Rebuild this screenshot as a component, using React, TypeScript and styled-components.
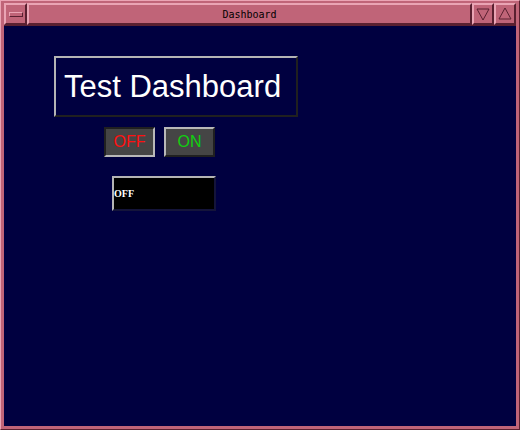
import styled, { createGlobalStyle } from "styled-components";

const GlobalStyle = createGlobalStyle`
  html, body {
    margin: 0;
    padding: 0;
    background: #000040;
  }
  body {
    font-family: "Liberation Sans", Arial, sans-serif;
  }
`;

const pink = "#c06478";
const pinkLight = "#eaa4b4";
const pinkDark = "#5a2030";

const Window = styled.div`
  width: 520px;
  height: 430px;
  box-sizing: border-box;
  background: ${pink};
  border-top: 1px solid ${pinkLight};
  border-left: 1px solid ${pinkLight};
  border-right: 1px solid ${pinkDark};
  border-bottom: 1px solid ${pinkDark};
  padding: 2px 3px 3px 3px;
  display: flex;
  flex-direction: column;
`;

const TitleBar = styled.div`
  height: 22px;
  display: flex;
  flex-shrink: 0;
`;

const BarButton = styled.div<{ $w: number }>`
  width: ${(p) => p.$w}px;
  box-sizing: border-box;
  border-top: 2px solid ${pinkLight};
  border-left: 2px solid ${pinkLight};
  border-right: 2px solid ${pinkDark};
  border-bottom: 2px solid ${pinkDark};
  display: flex;
  align-items: center;
  justify-content: center;
  flex-shrink: 0;
`;

const MenuBar = styled.div`
  width: 12px;
  height: 3px;
  border-top: 1px solid ${pinkLight};
  border-left: 1px solid ${pinkLight};
  border-right: 1px solid ${pinkDark};
  border-bottom: 1px solid ${pinkDark};
`;

const TitleArea = styled.div`
  flex: 1;
  box-sizing: border-box;
  border-top: 2px solid ${pinkLight};
  border-left: 2px solid ${pinkLight};
  border-right: 2px solid ${pinkDark};
  border-bottom: 2px solid ${pinkDark};
  display: flex;
  align-items: center;
  justify-content: center;
  font-family: "DejaVu Sans Mono", monospace;
  font-size: 10px;
  color: #000;
`;

const Content = styled.div`
  flex: 1;
  background: #000040;
  border-top: 1px solid ${pinkDark};
  display: flex;
  flex-direction: column;
  align-items: flex-start;
  padding: 30px 0 0 50px;
`;

const TitleBox = styled.div`
  width: 244px;
  height: 61px;
  box-sizing: border-box;
  border-top: 2px solid #b4b4b4;
  border-left: 2px solid #b4b4b4;
  border-right: 2px solid #202020;
  border-bottom: 2px solid #202020;
  display: flex;
  align-items: center;
  padding-left: 8px;
  color: #fff;
  font-size: 31px;
`;

const ButtonRow = styled.div`
  display: flex;
  gap: 9px;
  margin: 10px 0 0 50px;
`;

const Toggle = styled.div<{ $pressed: boolean; $color: string }>`
  width: 51px;
  height: 30px;
  box-sizing: border-box;
  background: #454545;
  border-style: solid;
  border-width: 2px;
  border-color: ${(p) =>
    p.$pressed ? "#202020 #b8b8b8 #b8b8b8 #202020" : "#b8b8b8 #202020 #202020 #b8b8b8"};
  display: flex;
  align-items: center;
  justify-content: center;
  color: ${(p) => p.$color};
  font-size: 16px;
`;

const Display = styled.div`
  width: 104px;
  height: 35px;
  box-sizing: border-box;
  margin: 19px 0 0 58px;
  background: #000;
  border-style: solid;
  border-width: 2px;
  border-color: #b4b4b4 #14143a #14143a #b4b4b4;
  display: flex;
  align-items: center;
  color: #fff;
  font-family: "Liberation Serif", "Times New Roman", serif;
  font-weight: bold;
  font-size: 10px;
`;

function Triangle({ down }: { down: boolean }) {
  return (
    <svg width="14" height="14" viewBox="0 0 14 14">
      <polygon
        points={down ? "1,2 13,2 7,13" : "7,1 13,12 1,12"}
        fill="none"
        stroke={pinkDark}
        strokeWidth="1"
      />
    </svg>
  );
}

export default function App() {
  return (
    <>
      <GlobalStyle />
      <Window>
        <TitleBar>
          <BarButton $w={23}>
            <MenuBar />
          </BarButton>
          <TitleArea>Dashboard</TitleArea>
          <BarButton $w={22}>
            <Triangle down />
          </BarButton>
          <BarButton $w={22}>
            <Triangle down={false} />
          </BarButton>
        </TitleBar>
        <Content>
          <TitleBox>Test Dashboard</TitleBox>
          <ButtonRow>
            <Toggle $pressed $color="#ff1010">OFF</Toggle>
            <Toggle $pressed={false} $color="#10d010">ON</Toggle>
          </ButtonRow>
          <Display>OFF</Display>
        </Content>
      </Window>
    </>
  );
}
